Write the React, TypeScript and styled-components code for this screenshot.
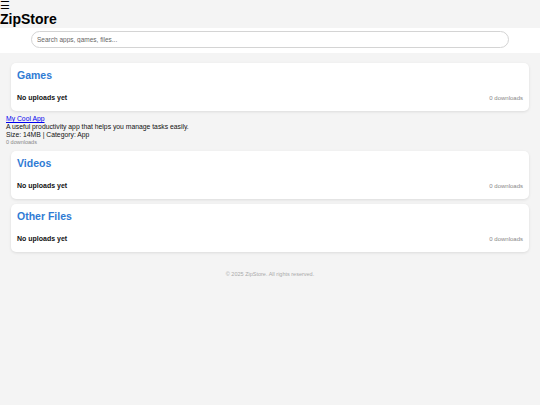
import styled, { createGlobalStyle } from 'styled-components';

const GlobalStyle = createGlobalStyle`
  body {
    margin: 0;
    background: #f4f4f4;
    font-family: "Liberation Sans", Arial, sans-serif;
    color: #111;
  }
`;

const sections = ['Games', 'Videos', 'Other Files'];

const App = () => {
  return (
    <>
      <GlobalStyle />
      <Header>
        <Menu>☰</Menu>
        <Logo>ZipStore</Logo>
      </Header>
      <SearchBar>
        <SearchInput placeholder="Search apps, games, files..." />
      </SearchBar>
      <Main>
        {sections.map((name, i) => (
          <div key={name}>
            <Card>
              <CardTitle>{name}</CardTitle>
              <Row>
                <Empty>No uploads yet</Empty>
                <Downloads>0 downloads</Downloads>
              </Row>
            </Card>
            {i === 0 && (
              <AppItem>
                <AppLink href="#">My Cool App</AppLink>
                <Line>A useful productivity app that helps you manage tasks easily.</Line>
                <Line>Size: 14MB | Category: App</Line>
                <Small>0 downloads</Small>
              </AppItem>
            )}
          </div>
        ))}
      </Main>
      <Footer>© 2025 ZipStore. All rights reserved.</Footer>
    </>
  );
};

export default App;

const Header = styled.header`
  display: flex;
  flex-direction: column;
  padding-bottom: 1px;
`;

const Menu = styled.div`
  font-size: 11px;
  line-height: 11px;
  color: #000;
`;

const Logo = styled.h1`
  margin: 0;
  font-size: 14px;
  line-height: 16px;
  font-weight: bold;
  color: #000;
`;

const SearchBar = styled.div`
  background: #fff;
  padding: 3px 0 5px;
  display: flex;
  justify-content: center;
`;

const SearchInput = styled.input`
  width: 478px;
  height: 17px;
  box-sizing: border-box;
  border: 1px solid #d4d4d4;
  border-radius: 9px;
  padding: 0 5px;
  font-family: "Liberation Sans", Arial, sans-serif;
  font-size: 6.5px;
  outline: none;
  &::placeholder {
    color: #666;
  }
`;

const Main = styled.main`
  padding: 10px 6px 0;
`;

const Card = styled.section`
  background: #fff;
  margin: 0 5px 5px;
  padding: 6px;
  border-radius: 5px;
  box-shadow: 0 1px 3px rgba(0, 0, 0, 0.1);
`;

const CardTitle = styled.h2`
  margin: 0 0 9px;
  font-size: 10.5px;
  line-height: 12px;
  color: #2f7bd4;
`;

const Row = styled.div`
  display: flex;
  justify-content: space-between;
  align-items: center;
  padding: 4px 0 3px;
`;

const Empty = styled.strong`
  font-size: 7px;
  line-height: 8px;
  color: #111;
`;

const Downloads = styled.span`
  font-size: 6px;
  color: #888;
`;

const AppItem = styled.div`
  display: flex;
  flex-direction: column;
  font-size: 6.8px;
  line-height: 8px;
  margin: -1px 0 5px;
`;

const AppLink = styled.a`
  color: #0000ee;
  align-self: flex-start;
`;

const Line = styled.div``;

const Small = styled.div`
  font-size: 5.5px;
  line-height: 7px;
  color: #888;
`;

const Footer = styled.footer`
  text-align: center;
  font-size: 5.5px;
  color: #aaa;
  padding: 14px 0;
`;
